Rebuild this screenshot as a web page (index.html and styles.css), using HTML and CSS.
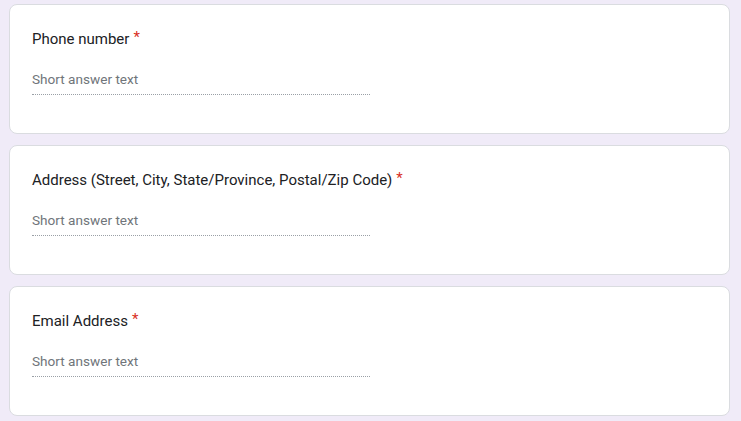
FILE: index.html
```html
<!DOCTYPE html>
<html>
<head>
<meta charset="utf-8">
<link rel="stylesheet" href="styles.css">
</head>
<body>
<div class="list">
  <div class="card">
    <div class="title">Phone number<span class="req">*</span></div>
    <div class="input">Short answer text</div>
  </div>
  <div class="card">
    <div class="title">Address (Street, City, State/Province, Postal/Zip Code)<span class="req">*</span></div>
    <div class="input">Short answer text</div>
  </div>
  <div class="card">
    <div class="title">Email Address<span class="req">*</span></div>
    <div class="input">Short answer text</div>
  </div>
</div>
</body>
</html>
```
FILE: styles.css
```css
html, body {
  margin: 0;
  padding: 0;
  background: #f0ebf8;
}
body {
  font-family: Roboto, "Noto Sans", sans-serif;
  width: 741px;
  height: 421px;
  overflow: hidden;
}
.list {
  display: flex;
  flex-direction: column;
  gap: 11px;
  padding: 4px 11px 0 9px;
}
.card {
  background: #fff;
  border: 1px solid #dadce0;
  border-radius: 8px;
  height: 106px;
  padding: 22px 23px 0 22px;
}
.title {
  font-size: 15px;
  line-height: 24px;
  color: #202124;
}
.req {
  color: #d93025;
  margin-left: 4px;
  position: relative;
  top: -2px;
}
.input {
  margin-top: 18px;
  width: 338px;
  font-size: 13.6px;
  line-height: 20px;
  color: #70757a;
  padding-bottom: 5px;
  border-bottom: 1px dotted #9aa0a6;
}
```
